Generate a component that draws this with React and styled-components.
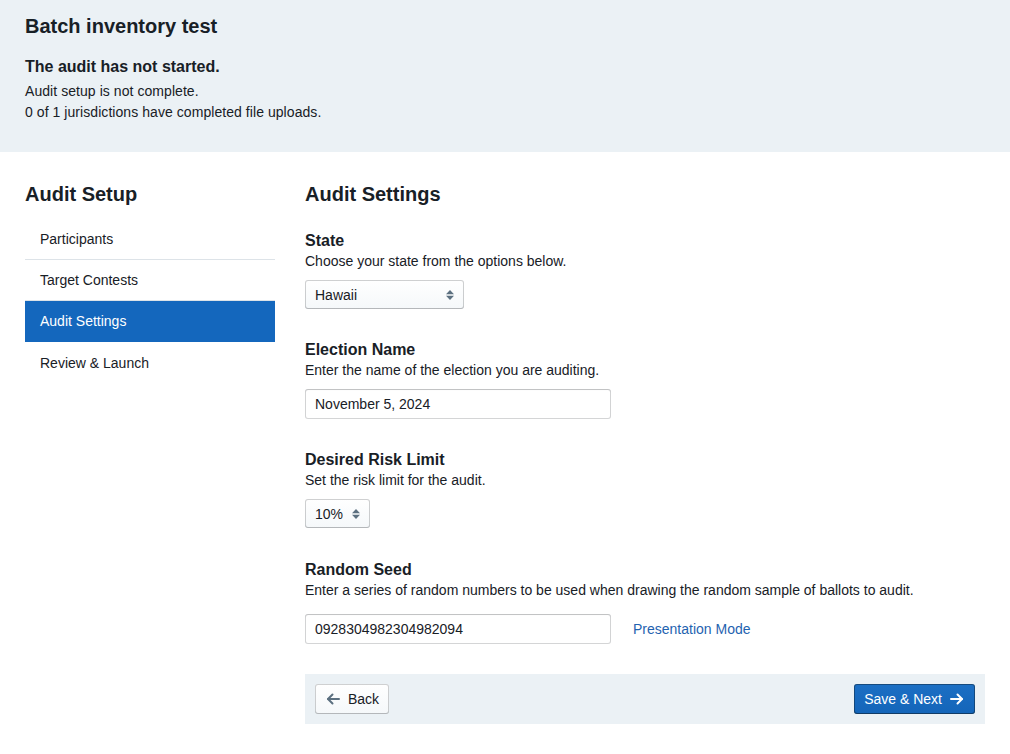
import React from "react";
import styled, { createGlobalStyle } from "styled-components";

const Global = createGlobalStyle`
  html, body { margin: 0; padding: 0; background: #fff; }
  body {
    font-family: "Liberation Sans", Arial, sans-serif;
    font-size: 14px;
    color: #182026;
    -webkit-font-smoothing: antialiased;
  }
  * { box-sizing: border-box; }
`;

const Header = styled.header`
  background: #ebf1f5;
  padding: 14px 25px 30px;
  height: 152px;
`;

const Title = styled.h1`
  margin: 0;
  font-size: 20px;
  line-height: 25px;
  font-weight: 700;
`;

const Status = styled.h2`
  margin: 18px 0 4px;
  font-size: 16px;
  line-height: 20px;
  font-weight: 700;
`;

const Line = styled.p`
  margin: 0;
  line-height: 21px;
  letter-spacing: 0.06px;
`;

const Main = styled.main`
  display: flex;
  gap: 30px;
  padding: 30px 25px 0;
`;

const Sidebar = styled.nav`
  width: 250px;
  flex: none;
`;

const SectionTitle = styled.h3`
  margin: 0;
  font-size: 20px;
  line-height: 25px;
  font-weight: 700;
`;

const Menu = styled.ul`
  list-style: none;
  margin: 12px 0 0;
  padding: 0;
`;

const MenuItem = styled.li`
  height: 41px;
  padding: 0 15px;
  display: flex;
  align-items: center;
  border-bottom: 1px solid ${(p) => (p.$active ? "#1467bd" : "#dde3e8")};
  background: ${(p) => (p.$active ? "#1467bd" : "transparent")};
  color: ${(p) => (p.$active ? "#fff" : "#182026")};
  &:last-child { border-bottom: none; }
`;

const Content = styled.section`
  flex: 1;
`;

const Field = styled.div`
  margin-top: ${(p) => p.$mt}px;
`;

const Label = styled.div`
  font-size: 16px;
  line-height: 20px;
  font-weight: 700;
`;

const Help = styled.div`
  line-height: 20px;
  margin-bottom: ${(p) => p.$gap ?? 9}px;
`;

const SelectBox = styled.div`
  width: ${(p) => p.$w}px;
  height: 29px;
  display: flex;
  align-items: center;
  justify-content: space-between;
  padding: 0 9px 0 10px;
  border-radius: 3px;
  background: linear-gradient(#fff, #f5f8fa);
  box-shadow: inset 0 0 0 1px rgba(16,22,26,0.2), inset 0 -1px 0 rgba(16,22,26,0.1);
`;

const Input = styled.div`
  width: 306px;
  height: 30px;
  display: flex;
  align-items: center;
  padding: 0 10px;
  border-radius: 3px;
  background: #fff;
  box-shadow: inset 0 0 0 1px rgba(16,22,26,0.18), inset 0 1px 1px rgba(16,22,26,0.1);
`;

const Row = styled.div`
  display: flex;
  align-items: center;
  gap: 22px;
`;

const Link = styled.a`
  color: #1f63b0;
  text-decoration: none;
`;

const Footer = styled.div`
  margin-top: 30px;
  background: #ebf1f5;
  padding: 10px;
  height: 50px;
  display: flex;
  justify-content: space-between;
  align-items: flex-start;
`;

const Button = styled.button`
  height: 30px;
  display: inline-flex;
  align-items: center;
  gap: 7px;
  padding: 0 10px;
  font-family: inherit;
  font-size: 14px;
  border: none;
  border-radius: 3px;
  cursor: pointer;
  color: ${(p) => (p.$primary ? "#fff" : "#182026")};
  background: ${(p) => (p.$primary ? "linear-gradient(#1c6fc4, #1465b9)" : "linear-gradient(#fff, #f5f8fa)")};
  box-shadow: ${(p) =>
    p.$primary
      ? "inset 0 0 0 1px rgba(16,22,26,0.4), inset 0 -1px 0 rgba(16,22,26,0.2)"
      : "inset 0 0 0 1px rgba(16,22,26,0.2), inset 0 -1px 0 rgba(16,22,26,0.1)"};
`;

const Carets = () => (
  <svg width="10" height="14" viewBox="0 0 10 14">
    <path d="M1 6.2 L5 2 L9 6.2 Z" fill="#5c7080" />
    <path d="M1 7.8 L5 12 L9 7.8 Z" fill="#5c7080" />
  </svg>
);

const Arrow = ({ dir, color }) => (
  <svg width="16" height="16" viewBox="0 0 16 16" fill="none" stroke={color} strokeWidth="2" strokeLinecap="round" strokeLinejoin="round">
    {dir === "left" ? (
      <>
        <path d="M14 8 H3" />
        <path d="M7.5 3.5 L3 8 L7.5 12.5" />
      </>
    ) : (
      <>
        <path d="M2 8 H13" />
        <path d="M8.5 3.5 L13 8 L8.5 12.5" />
      </>
    )}
  </svg>
);

const menu = ["Participants", "Target Contests", "Audit Settings", "Review & Launch"];

export default function App() {
  return (
    <>
      <Global />
      <Header>
        <Title>Batch inventory test</Title>
        <Status>The audit has not started.</Status>
        <Line>Audit setup is not complete.</Line>
        <Line>0 of 1 jurisdictions have completed file uploads.</Line>
      </Header>
      <Main>
        <Sidebar>
          <SectionTitle>Audit Setup</SectionTitle>
          <Menu>
            {menu.map((m) => (
              <MenuItem key={m} $active={m === "Audit Settings"}>{m}</MenuItem>
            ))}
          </Menu>
        </Sidebar>
        <Content>
          <SectionTitle>Audit Settings</SectionTitle>
          <Field $mt={24}>
            <Label>State</Label>
            <Help>Choose your state from the options below.</Help>
            <SelectBox $w={159}>Hawaii<Carets /></SelectBox>
          </Field>
          <Field $mt={31}>
            <Label>Election Name</Label>
            <Help>Enter the name of the election you are auditing.</Help>
            <Input>November 5, 2024</Input>
          </Field>
          <Field $mt={31}>
            <Label>Desired Risk Limit</Label>
            <Help>Set the risk limit for the audit.</Help>
            <SelectBox $w={65}>10%<Carets /></SelectBox>
          </Field>
          <Field $mt={32}>
            <Label>Random Seed</Label>
            <Help $gap={14}>Enter a series of random numbers to be used when drawing the random sample of ballots to audit.</Help>
            <Row>
              <Input>0928304982304982094</Input>
              <Link href="#">Presentation Mode</Link>
            </Row>
          </Field>
          <Footer>
            <Button><Arrow dir="left" color="#5c7080" />Back</Button>
            <Button $primary>Save &amp; Next<Arrow dir="right" color="#fff" /></Button>
          </Footer>
        </Content>
      </Main>
    </>
  );
}
